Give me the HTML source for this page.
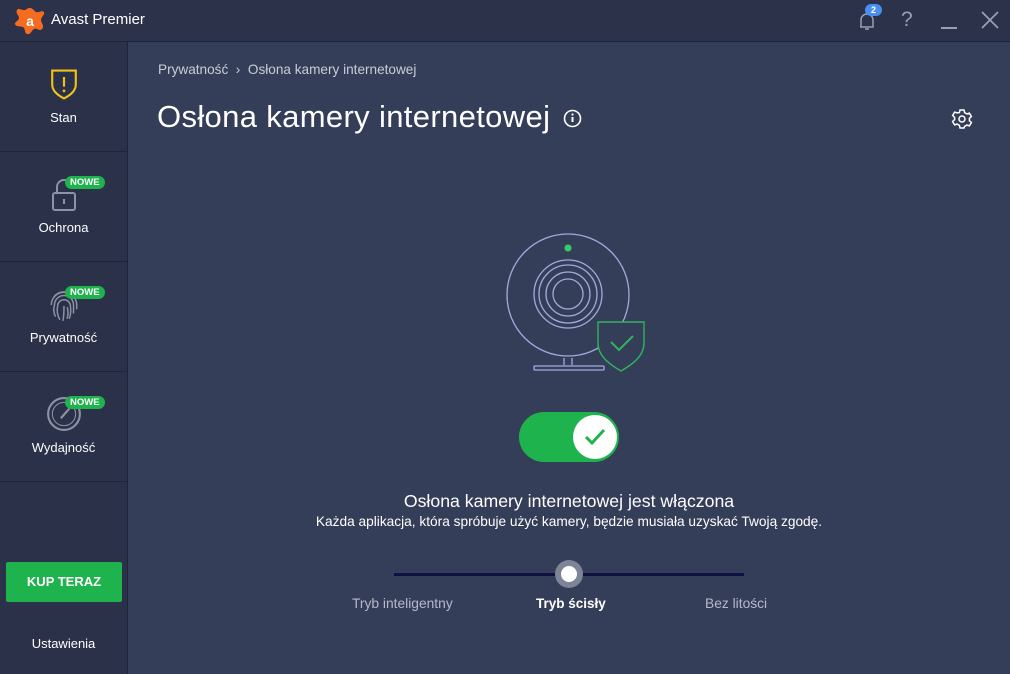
<!DOCTYPE html>
<html><head><meta charset="utf-8"><style>
*{margin:0;padding:0;box-sizing:border-box}
body{width:1010px;height:674px;overflow:hidden;background:#353e58;font-family:"Liberation Sans",sans-serif;color:#fff;position:relative}
.top{position:absolute;left:0;top:0;width:1010px;height:42px;background:#2b3249;border-bottom:1px solid #1f2538}
.side{position:absolute;left:0;top:42px;width:128px;height:632px;background:#2a3149;border-right:1px solid #1f2538}
.item{position:absolute;left:0;width:127px;height:110px;border-bottom:1px solid #1f2538;text-align:center;font-size:13px}
.item .lbl{position:absolute;left:0;right:0;top:65px}
.badge{position:absolute;left:65px;top:24px;background:#1fb34e;color:#fff;font-size:9.5px;font-weight:bold;padding:1px 5px;border-radius:7px;line-height:11px}
.abs{position:absolute}
</style></head><body>
<div class="top">
<svg class="abs" style="left:14px;top:5px" width="32" height="32" viewBox="0 0 32 32"><path d="M16 3c3 0 4 3 6 4 3 1 6-2 8 0 1 3-3 5-3 8s4 6 1 9-5-2-8 0-3 6-7 5c-3-1-1-5-4-7-3-1-7 0-8-3 0-3 4-3 4-6S1 8 3 5s5 1 8 0 2-2 5-2z" fill="#f56b1f"/><text x="16" y="21" font-size="14" font-weight="bold" fill="#fff" text-anchor="middle" font-family="Liberation Sans">a</text></svg>
<div class="abs" style="left:51px;top:11px;font-size:15px">Avast Premier</div>
<svg class="abs" style="left:857px;top:10px" width="20" height="22" viewBox="0 0 20 22"><path d="M4 17V10a6 6 0 0 1 12 0v7H3M8 19h4" stroke="#9aa0b3" stroke-width="1.5" fill="none"/></svg>
<div class="abs" style="left:865px;top:4px;width:17px;height:12px;border-radius:6px;background:#4a8ef0;font-size:9px;font-weight:bold;text-align:center;line-height:12px">2</div>
<div class="abs" style="left:901px;top:8px;font-size:21px;color:#9aa0b3">?</div>
<div class="abs" style="left:941px;top:27px;width:16px;height:2px;background:#9aa0b3"></div>
<svg class="abs" style="left:981px;top:11px" width="18" height="18"><path d="M1 1L17 17M17 1L1 17" stroke="#9aa0b3" stroke-width="1.8"/></svg>
</div>
<div class="side">
<div class="item" style="top:0">
<svg class="abs" style="left:49px;top:25px" width="30" height="35" viewBox="0 0 28 32"><path d="M3 3h22v13c0 6-5 10-11 13C8 26 3 22 3 16z" fill="none" stroke="#f2c118" stroke-width="2"/><path d="M14 9v9" stroke="#f2c118" stroke-width="2"/><circle cx="14" cy="22" r="1.3" fill="#f2c118"/></svg>
<div class="lbl" style="top:68px">Stan</div></div>
<div class="item" style="top:110px">
<svg class="abs" style="left:50px;top:26px" width="28" height="34" viewBox="0 0 28 34"><path d="M7 14V9a7 7 0 0 1 14 0" fill="none" stroke="#8d93a6" stroke-width="2"/><rect x="3" y="15" width="22" height="17" rx="2" fill="none" stroke="#8d93a6" stroke-width="2"/><path d="M14 21v5" stroke="#8d93a6" stroke-width="2"/></svg>
<span class="badge">NOWE</span><div class="lbl" style="top:68px">Ochrona</div></div>
<div class="item" style="top:220px">
<svg class="abs" style="left:48px;top:25px" width="32" height="36" viewBox="0 0 30 34" fill="none" stroke="#8d93a6" stroke-width="1.4"><path d="M5 10a12 12 0 0 1 20 0M3 17a12 12 0 0 1 24 0v4M7 28c-2-4-2-8-1-11a9 9 0 0 1 18 0v8M11 31c-2-4-3-9-2-13a6 6 0 0 1 12 0c1 5 0 9-1 12M15 18c0 5 0 9-1 14M18 30c1-4 1-8 0-11"/></svg>
<span class="badge">NOWE</span><div class="lbl" style="top:68px">Prywatność</div></div>
<div class="item" style="top:330px">
<svg class="abs" style="left:46px;top:24px" width="36" height="36" viewBox="0 0 34 34" fill="none" stroke="#8d93a6" stroke-width="2"><circle cx="17" cy="17" r="15"/><circle cx="17" cy="17" r="11" stroke-width="1"/><path d="M14 21l8-9" /></svg>
<span class="badge">NOWE</span><div class="lbl" style="top:68px">Wydajność</div></div>
<div class="abs" style="left:6px;top:520px;width:116px;height:40px;background:#1fb34e;font-size:13px;font-weight:bold;text-align:center;line-height:40px;border-radius:2px">KUP TERAZ</div>
<div class="abs" style="left:0;width:127px;top:594px;font-size:13px;text-align:center">Ustawienia</div>
</div>
<div class="abs" style="left:158px;top:62px;font-size:13.6px;color:#c9cdd8">Prywatność&nbsp; ›&nbsp; Osłona kamery internetowej</div>
<div class="abs" style="left:157px;top:99px;font-size:31px;letter-spacing:0.35px;color:#fff">Osłona kamery internetowej</div>
<svg class="abs" style="left:563px;top:109px" width="19" height="19"><circle cx="9.5" cy="9.5" r="8" fill="none" stroke="#fff" stroke-width="1.6"/><path d="M9.5 8v5" stroke="#fff" stroke-width="2"/><circle cx="9.5" cy="5.5" r="1.1" fill="#fff"/></svg>
<svg class="abs" style="left:951px;top:108px" width="22" height="22" viewBox="0 0 22 22"><path d="M9 2h4l.6 2.6 2.3 1.3 2.5-.8 2 3.4-2 1.8v2.4l2 1.8-2 3.4-2.5-.8-2.3 1.3L13 20H9l-.6-2.6-2.3-1.3-2.5.8-2-3.4 2-1.8V9.3l-2-1.8 2-3.4 2.5.8L8.4 4.6z" fill="none" stroke="#fff" stroke-width="1.5"/><circle cx="11" cy="11" r="3" fill="none" stroke="#fff" stroke-width="1.5"/></svg>
<svg class="abs" style="left:500px;top:228px" width="150" height="148" viewBox="0 0 150 148" fill="none">
<circle cx="68" cy="67" r="61" stroke="#a2aade" stroke-width="1.3"/>
<circle cx="68" cy="20" r="3.5" fill="#2fd06a"/>
<circle cx="68" cy="66" r="34" stroke="#a2aade" stroke-width="1.3"/>
<circle cx="68" cy="66" r="29" stroke="#a2aade" stroke-width="1.3"/>
<circle cx="68" cy="66" r="22" stroke="#a2aade" stroke-width="1.3"/>
<circle cx="68" cy="66" r="15" stroke="#a2aade" stroke-width="1.3"/>
<path d="M64 130v7M72 130v7" stroke="#a2aade" stroke-width="1.3"/>
<rect x="34" y="138" width="70" height="4" rx="1" stroke="#a2aade" stroke-width="1.3"/>
<path d="M98 94h46v21c0 13-11 21-23 28-12-7-23-15-23-28z" fill="#353e58" stroke="#2fb35e" stroke-width="1.4"/>
<path d="M111 114l8 8 14-14" stroke="#2fb35e" stroke-width="2"/>
</svg>
<div class="abs" style="left:519px;top:412px;width:100px;height:50px;border-radius:25px;background:#1fb34e"></div>
<div class="abs" style="left:573px;top:415px;width:44px;height:44px;border-radius:22px;background:#fff"></div>
<svg class="abs" style="left:583px;top:425px" width="24" height="24"><path d="M3 12l6 6L21 5" stroke="#1fb34e" stroke-width="3" fill="none"/></svg>
<div class="abs" style="left:128px;width:882px;top:491px;font-size:17.7px;text-align:center">Osłona kamery internetowej jest włączona</div>
<div class="abs" style="left:128px;width:882px;top:514px;font-size:13.7px;text-align:center">Każda aplikacja, która spróbuje użyć kamery, będzie musiała uzyskać Twoją zgodę.</div>
<div class="abs" style="left:394px;top:573px;width:350px;height:3px;background:#0f1240"></div>
<div class="abs" style="left:555px;top:560px;width:28px;height:28px;border-radius:14px;background:#7e8498"></div>
<div class="abs" style="left:561px;top:566px;width:16px;height:16px;border-radius:8px;background:#fff"></div>
<div class="abs" style="left:352px;top:596px;font-size:13.8px;color:#b5bac8">Tryb inteligentny</div>
<div class="abs" style="left:536px;top:596px;font-size:13.5px;font-weight:bold">Tryb ścisły</div>
<div class="abs" style="left:705px;top:596px;font-size:13.8px;color:#b5bac8">Bez litości</div>
</body></html>
